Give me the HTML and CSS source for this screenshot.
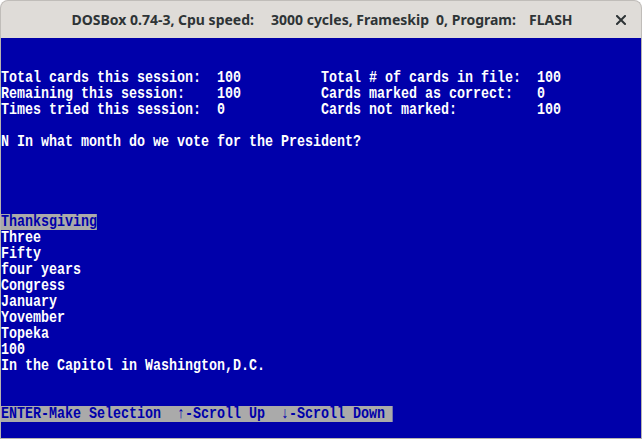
FILE: index.html
```html
<!DOCTYPE html>
<html>
<head>
<meta charset="utf-8">
<link rel="stylesheet" href="styles.css">
</head>
<body>
<div class="window">
  <div class="titlebar">
    <div class="title">DOSBox 0.74-3, Cpu speed:<span class="gap1"></span>3000 cycles, Frameskip<span class="gap2"></span>0, Program:<span class="gap3"></span>FLASH</div>
    <svg class="close" width="10" height="10" viewBox="0 0 10 10"><path d="M1 1 L9 9 M9 1 L1 9" stroke="#2e3436" stroke-width="2" stroke-linecap="square"/></svg>
  </div>
  <div class="screen">
    <pre class="text">


Total cards this session:  100          Total # of cards in file:  100
Remaining this session:    100          Cards marked as correct:   0
Times tried this session:  0            Cards not marked:          100

N In what month do we vote for the President?




<span class="hl">Thanksgiving</span>
Three
Fifty
four years
Congress
January
Yovember
Topeka
100
In the Capitol in Washington,D.C.


<span class="hl">ENTER-Make Selection  ↑-Scroll Up  ↓-Scroll Down </span>
</pre>
  </div>
</div>
</body>
</html>
```
FILE: styles.css
```css
html, body {
  margin: 0;
  padding: 0;
  background: #ffffff;
}
.window {
  width: 642px;
  height: 439px;
  display: flex;
  flex-direction: column;
}
.titlebar {
  height: 38px;
  box-sizing: border-box;
  background: #dfdcd8;
  border: 1px solid #c0bdb9;
  border-bottom: none;
  border-radius: 8px 8px 0 0;
  display: flex;
  align-items: center;
  justify-content: center;
  position: relative;
}
.title {
  font-family: "Noto Sans", "Open Sans", sans-serif;
  font-weight: bold;
  font-size: 14px;
  color: #2e3436;
  white-space: nowrap;
  margin-left: 2px;
}
.gap1 { display: inline-block; width: 17px; }
.gap2 { display: inline-block; width: 7px; }
.gap3 { display: inline-block; width: 13px; }
.close {
  position: absolute;
  right: 15px;
  top: 14px;
}
.screen {
  width: 640px;
  height: 400px;
  background: #0000aa;
  border: 1px solid #b6b3b0;
  border-top: none;
  overflow: hidden;
}
.text {
  margin: 0;
  width: 768px;
  transform: scaleX(0.833333);
  transform-origin: 0 0;
  font-family: "Liberation Mono", "DejaVu Sans Mono", monospace;
  font-weight: bold;
  font-size: 16px;
  line-height: 16px;
  color: #ffffff;
  white-space: pre;
}
.hl {
  display: inline-block;
  height: 16px;
  line-height: 16px;
  vertical-align: top;
  background: #aaaaaa;
  color: #0000aa;
}
```
